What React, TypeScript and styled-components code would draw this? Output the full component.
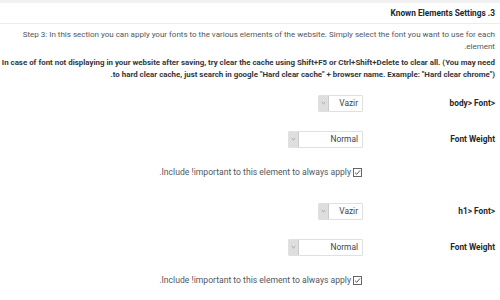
import React from "react";
import styled, { createGlobalStyle } from "styled-components";

const GlobalStyle = createGlobalStyle`
  html, body { margin: 0; padding: 0; background: #ffffff; }
  body { font-family: Roboto, "Noto Sans", sans-serif; }
`;

const TopStrip = styled.div`
  height: 3px;
  background: #f1f1f1;
`;

const Panel = styled.div`
  direction: rtl;
  background: #ffffff;
`;

const PanelHeader = styled.h2`
  margin: 0;
  height: 20px;
  display: flex;
  align-items: center;
  padding: 0 5px;
  font-size: 8.3px;
  font-weight: 700;
  color: #23282d;
  border-bottom: 1px solid #ececec;
`;

const Body = styled.div`
  padding: 5px 5px 0 1px;
`;

const Paragraph = styled.p<{ $bold?: boolean }>`
  margin: 0 0 5px 0;
  font-size: ${(p) => (p.$bold ? "7.9px" : "8px")};
  line-height: 11.5px;
  color: ${(p) => (p.$bold ? "#32373c" : "#50575e")};
  font-weight: ${(p) => (p.$bold ? 700 : 400)};
`;

const Form = styled.div`
  display: flex;
  flex-direction: column;
  margin-top: 3px;
`;

const FieldRow = styled.div`
  display: grid;
  grid-template-columns: 132px 1fr;
  align-items: center;
  height: 36px;
`;

const Label = styled.div`
  font-size: 8.3px;
  font-weight: 700;
  color: #23282d;
`;

const SelectBox = styled.div<{ $w: number }>`
  width: ${(p) => p.$w}px;
  height: 15px;
  display: flex;
  align-items: stretch;
  border: 1px solid #e0e0e0;
  border-radius: 1px;
  background: #fff;
  box-sizing: content-box;
`;

const SelectValue = styled.div`
  flex: 1;
  display: flex;
  align-items: center;
  padding-right: 4px;
  font-size: 8.4px;
  color: #3c434a;
`;

const ArrowBox = styled.div`
  width: 9px;
  background: #dedede;
  border-right: 1px solid #cacaca;
  display: flex;
  align-items: center;
  justify-content: center;
`;

const CheckRow = styled.label<{ $gap?: number }>`
  display: grid;
  grid-template-columns: 133px 1fr;
  align-items: center;
  height: 30px;
  margin-bottom: ${(p) => p.$gap ?? 0}px;
`;

const CheckInner = styled.div`
  display: flex;
  align-items: center;
  gap: 2px;
  font-size: 8.6px;
  color: #50575e;
`;

const Arrow = () => (
  <svg width="5" height="4" viewBox="0 0 5 4">
    <path d="M0.8 1.2 L2.5 2.8 L4.2 1.2" fill="none" stroke="#8a8a8a" strokeWidth="0.7" />
  </svg>
);

const Check = () => (
  <svg width="9" height="9" viewBox="0 0 9 9">
    <rect x="0.5" y="0.5" width="8" height="8" fill="#fff" stroke="#555" strokeWidth="0.9" />
    <path d="M2 4.6 L3.8 6.3 L7 2.4" fill="none" stroke="#444" strokeWidth="0.9" />
  </svg>
);

const Select = ({ value, width }: { value: string; width: number }) => (
  <SelectBox $w={width}>
    <SelectValue>{value}</SelectValue>
    <ArrowBox>
      <Arrow />
    </ArrowBox>
  </SelectBox>
);

const Field = ({ label, value, width }: { label: string; value: string; width: number }) => (
  <FieldRow>
    <Label>{label}</Label>
    <div>
      <Select value={value} width={width} />
    </div>
  </FieldRow>
);

const ImportantRow = ({ gap }: { gap?: number }) => (
  <CheckRow $gap={gap}>
    <span />
    <CheckInner>
      <Check />
      <span>Include !important to this element to always apply.</span>
    </CheckInner>
  </CheckRow>
);

export default function App() {
  return (
    <>
      <GlobalStyle />
      <TopStrip />
      <Panel>
        <PanelHeader>3. Known Elements Settings</PanelHeader>
        <Body>
          <Paragraph>
            Step 3: In this section you can apply your fonts to the various elements of the website. Simply select the font you want to use for each element.
          </Paragraph>
          <Paragraph $bold>
            In case of font not displaying in your website after saving, try clear the cache using Shift+F5 or Ctrl+Shift+Delete to clear all. (You may need to hard clear cache, just search in google "Hard clear cache" + browser name. Example: "Hard clear chrome")‎.
          </Paragraph>
          <Form>
            <Field label="<body> Font" value="Vazir" width={43} />
            <Field label="Font Weight" value="Normal" width={73} />
            <ImportantRow gap={6} />
            <Field label="<h1> Font" value="Vazir" width={43} />
            <Field label="Font Weight" value="Normal" width={73} />
            <ImportantRow />
          </Form>
        </Body>
      </Panel>
    </>
  );
}
